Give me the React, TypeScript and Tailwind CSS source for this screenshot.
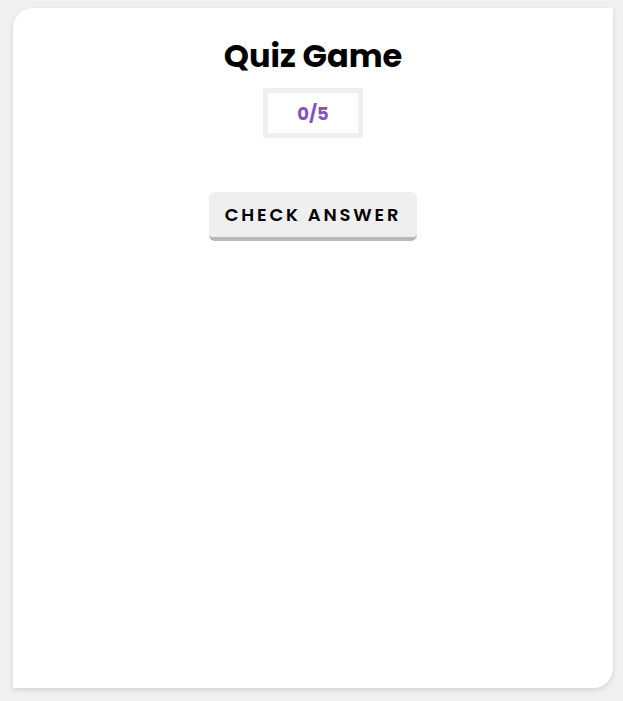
export default function App() {
  return (
    <div className="min-h-[701px] w-[623px] bg-[#f0f0f0] pt-2 pl-[13px]" style={{ fontFamily: 'Poppins, "Open Sans", "Liberation Sans", sans-serif' }}>
      <div className="flex h-[680px] w-[600px] flex-col items-center rounded-tl-[20px] rounded-br-[20px] bg-white pt-[28px] shadow-[0_2px_5px_rgba(0,0,0,0.12)]">
        <h1 className="text-[32px] leading-[40px] font-bold text-black">Quiz Game</h1>
        <div className="mt-[12px] flex h-[50px] w-[100px] items-center justify-center border-[5px] border-[#efefef]">
          <span className="text-[18px] font-bold text-[#8652c1]">0/5</span>
        </div>
        <button className="mt-[54px] h-[49px] w-[208px] rounded-[6px] border-b-[4px] border-[#b8b8b8] bg-[#efefef] text-[18px] font-semibold tracking-[2.8px] text-black">
          CHECK ANSWER
        </button>
      </div>
    </div>
  )
}
